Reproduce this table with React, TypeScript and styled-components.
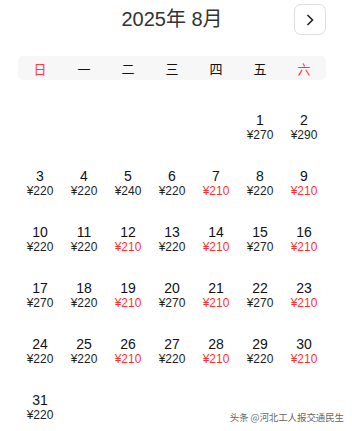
import React from 'react';
import styled, { createGlobalStyle } from 'styled-components';

const GlobalStyle = createGlobalStyle`
  html, body {
    margin: 0;
    padding: 0;
    background: #fff;
  }
  body {
    font-family: 'Liberation Sans', 'Noto Sans CJK SC', sans-serif;
  }
`;

const Page = styled.div`
  position: relative;
  width: 352px;
  height: 431px;
  padding: 4px 26px 0 18px;
  box-sizing: border-box;
  overflow: hidden;
`;

const Header = styled.div`
  display: grid;
  grid-template-columns: 1fr auto 1fr;
  align-items: center;
  height: 31px;
`;

const Title = styled.div`
  grid-column: 2;
  font-size: 20px;
  line-height: 31px;
  color: #333;
  font-family: 'Liberation Sans', 'Noto Sans CJK SC', sans-serif;
`;

const NextButton = styled.button`
  grid-column: 3;
  justify-self: end;
  width: 32px;
  height: 31px;
  padding: 0;
  border: 1px solid #dedede;
  border-radius: 7px;
  background: #fff;
  display: flex;
  align-items: center;
  justify-content: center;
  cursor: pointer;
`;

const WeekBar = styled.div`
  display: grid;
  grid-template-columns: repeat(7, 44px);
  height: 24px;
  margin-top: 21px;
  background: #f7f7f7;
  border-radius: 5px;
`;

const WeekDay = styled.div<{ $red: boolean }>`
  display: flex;
  align-items: center;
  justify-content: center;
  font-family: 'Noto Sans CJK SC', sans-serif;
  font-size: 13px;
  color: ${(p) => (p.$red ? '#ff3b3b' : '#111')};
`;

const Days = styled.div`
  display: grid;
  grid-template-columns: repeat(7, 44px);
  grid-auto-rows: 56px;
  margin-top: 33px;
`;

const DayCell = styled.div`
  display: flex;
  flex-direction: column;
  align-items: center;
`;

const DayNum = styled.div`
  font-size: 14px;
  line-height: 15px;
  color: #111;
`;

const Price = styled.div<{ $low: boolean }>`
  font-size: 12px;
  line-height: 14px;
  color: ${(p) => (p.$low ? '#ff2f2f' : '#222')};
`;

const Watermark = styled.div`
  position: absolute;
  right: 8px;
  bottom: 7px;
  font-family: 'Noto Sans CJK SC', sans-serif;
  font-size: 9.5px;
  color: rgba(70, 70, 70, 0.85);
  letter-spacing: -0.1px;
`;

const weekdays = ['日', '一', '二', '三', '四', '五', '六'];

const prices: number[] = [
  270, 290, 220, 220, 240, 220, 210, 220, 210, 220, 220, 210, 220, 210, 270, 210,
  270, 220, 210, 270, 210, 270, 210, 220, 220, 210, 220, 210, 220, 210, 220,
];

const firstOffset = 5;

const App: React.FC = () => {
  const cells: React.ReactNode[] = [];
  for (let i = 0; i < firstOffset; i++) {
    cells.push(<DayCell key={`e${i}`} />);
  }
  prices.forEach((price, i) => {
    cells.push(
      <DayCell key={i}>
        <DayNum>{i + 1}</DayNum>
        <Price $low={price === 210}>¥{price}</Price>
      </DayCell>
    );
  });

  return (
    <Page>
      <GlobalStyle />
      <Header>
        <Title>2025年 8月</Title>
        <NextButton aria-label="下个月">
          <svg width="10" height="14" viewBox="0 0 10 14">
            <path d="M2.5 2 L7.5 7 L2.5 12" fill="none" stroke="#222" strokeWidth="1.6" />
          </svg>
        </NextButton>
      </Header>
      <WeekBar>
        {weekdays.map((d, i) => (
          <WeekDay key={d} $red={i === 0 || i === 6}>
            {d}
          </WeekDay>
        ))}
      </WeekBar>
      <Days>{cells}</Days>
      <Watermark>头条 @河北工人报交通民生</Watermark>
    </Page>
  );
};

export default App;
